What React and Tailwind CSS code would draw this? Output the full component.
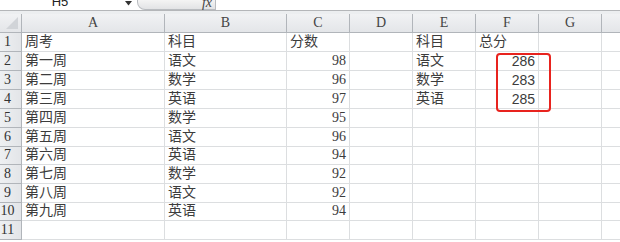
import React from 'react';

// Excel-like sheet snippet: name box / formula bar strip on top,
// column letters, row numbers and a red highlight over the totals.
const COLS = [
  { key: 'A', w: 'w-[143px]' },
  { key: 'B', w: 'w-[122px]' },
  { key: 'C', w: 'w-[63px]' },
  { key: 'D', w: 'w-[63px]' },
  { key: 'E', w: 'w-[63px]' },
  { key: 'F', w: 'w-[63px]' },
  { key: 'G', w: 'w-[63px]' },
];

const ROWS = [
  { h: 'h-[19px]', cells: ['周考', '科目', '分数', '', '科目', '总分'] },
  { h: 'h-[19px]', cells: ['第一周', '语文', 98, '', '语文', 286] },
  { h: 'h-[19px]', cells: ['第二周', '数学', 96, '', '数学', 283] },
  { h: 'h-[19px]', cells: ['第三周', '英语', 97, '', '英语', 285] },
  { h: 'h-[19px]', cells: ['第四周', '数学', 95] },
  { h: 'h-[19px]', cells: ['第五周', '语文', 96] },
  { h: 'h-[18px]', cells: ['第六周', '英语', 94] },
  { h: 'h-[19px]', cells: ['第七周', '数学', 92] },
  { h: 'h-[19px]', cells: ['第八周', '语文', 92] },
  { h: 'h-[18px]', cells: ['第九周', '英语', 94] },
  { h: 'h-[19px]', cells: [] },
];

const serif = 'font-["Liberation_Serif","Noto_Sans_CJK_SC",serif]';
const sans = 'font-["Liberation_Sans","Noto_Sans_CJK_SC",sans-serif]';

function Cell({ value, col, rowH }) {
  const isNum = typeof value === 'number';
  // totals column uses a sans face, the score column a serif one
  const face = isNum && col.key === 'F' ? sans : serif;
  return (
    <div
      className={`${col.w} ${rowH} shrink-0 flex items-end border-r border-b border-[#dcdee0] pb-[1px] ${
        isNum ? 'justify-end pr-[3px]' : 'pl-[3px]'
      }`}
    >
      <span className={`${face} text-[14px] leading-[16px] text-[#3c3c3c] whitespace-nowrap`}>{value}</span>
    </div>
  );
}

export default function App() {
  return (
    <div className={`relative w-[620px] h-[242px] overflow-hidden bg-white ${serif}`}>
      {/* name box + formula bar, cut off at the top */}
      <div className="flex h-[10px] overflow-hidden bg-white">
        <div className="w-[120px] shrink-0 flex justify-center">
          <span className={`${sans} text-[13px] leading-[13px] -mt-[5px] text-[#222]`}>H5</span>
        </div>
        <div className="w-[17px] shrink-0 flex justify-center">
          <svg width="7" height="6" viewBox="0 0 7 6" className="mt-[1px]">
            <path d="M0 0 L7 0 L3.5 4.5 Z" fill="#333" />
          </svg>
        </div>
        <div className="w-[79px] shrink-0 h-[10px] rounded-bl-[8px] border-l border-b border-r border-[#b9bcc0] bg-gradient-to-b from-[#f4f4f4] to-[#e2e3e5] flex justify-end items-end pr-[3px]">
          <span className="font-['Liberation_Serif',serif] italic text-[14px] leading-[14px] -mb-[1px] text-[#444]">fx</span>
        </div>
        <div className="flex-1" />
      </div>
      <div className="h-[1px] bg-[#b4b6b9]" />
      <div className="h-[3px] bg-[#eceef0]" />

      {/* column letters */}
      <div className="flex h-[19px] bg-gradient-to-b from-[#f1f2f4] to-[#e3e5e8]">
        <div className="w-[22px] shrink-0 border-r border-b border-[#b1b5ba] relative">
          <svg width="12" height="12" viewBox="0 0 12 12" className="absolute right-[3px] bottom-[3px]">
            <path d="M12 0 L12 12 L0 12 Z" fill="#d1d4d8" />
          </svg>
        </div>
        {COLS.map((c) => (
          <div
            key={c.key}
            className={`${c.w} shrink-0 flex items-center justify-center border-r border-b border-[#b1b5ba] text-[14px] leading-[16px] text-[#444]`}
          >
            {c.key}
          </div>
        ))}
        <div className="flex-1 border-b border-[#b1b5ba]" />
      </div>

      {/* data rows */}
      {ROWS.map((r, i) => (
        <div key={i} className="flex">
          <div
            className={`w-[22px] ${r.h} shrink-0 flex items-end justify-center pr-[6px] pb-[1px] border-r border-b border-[#b1b5ba] bg-gradient-to-r from-[#eef0f2] to-[#e3e5e8] text-[14px] leading-[16px] text-[#333]`}
          >
            {i + 1}
          </div>
          {COLS.map((c, j) => (
            <Cell key={c.key} col={c} rowH={r.h} value={r.cells[j] ?? ''} />
          ))}
          <div className={`flex-1 ${r.h} border-b border-[#dcdee0]`} />
        </div>
      ))}

      {/* red highlight over the totals */}
      <div className="absolute left-[496px] top-[53px] w-[55px] h-[59px] border-2 border-[#e8231e] rounded-[4px]" />
    </div>
  );
}
